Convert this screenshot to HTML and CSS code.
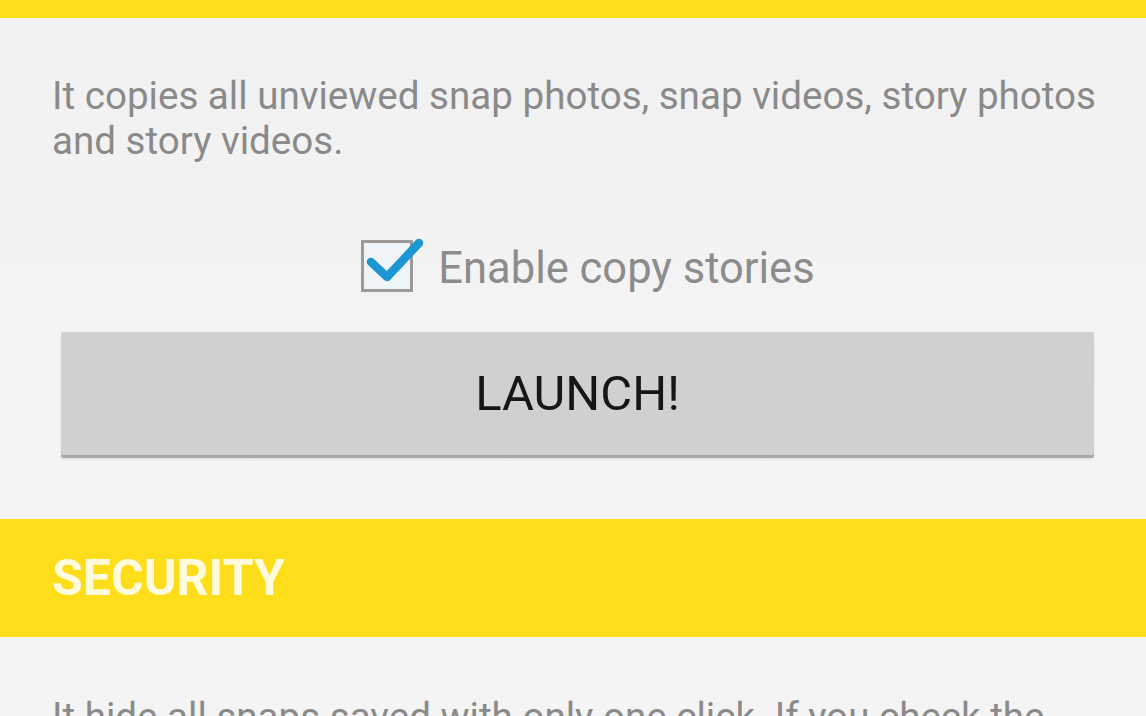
FILE: index.html
```html
<!DOCTYPE html>
<html>
<head>
<meta charset="utf-8">
<link rel="stylesheet" href="styles.css">
</head>
<body>
<div class="page">
  <div class="topbar"></div>
  <section class="content">
    <p class="desc">It copies all unviewed snap photos, snap videos, story photos<br>and story videos.</p>
    <label class="check-row">
      <span class="checkbox">
        <svg width="64" height="58" viewBox="0 0 64 58">
          <rect x="1.5" y="6.5" width="49" height="49" fill="rgba(235,245,250,0.6)" stroke="#9b9b9b" stroke-width="3"/>
          <path d="M10 27 L26 42 L58 8" fill="none" stroke="#1c97d1" stroke-width="8.5" stroke-linecap="round" stroke-linejoin="round"/>
        </svg>
      </span>
      <span class="check-label">Enable copy stories</span>
    </label>
    <div class="btn-wrap">
      <button class="launch">LAUNCH!</button>
    </div>
  </section>
  <div class="section-head">SECURITY</div>
  <section class="content2">
    <p class="desc">It hide all snaps saved with only one click. If you check the</p>
  </section>
</div>
</body>
</html>
```

FILE: styles.css
```css
html, body {
  margin: 0;
  padding: 0;
}
body {
  width: 1146px;
  height: 716px;
  overflow: hidden;
  background: #f4f4f4;
  font-family: Roboto, "Noto Sans", sans-serif;
}
.page {
  display: flex;
  flex-direction: column;
}
.topbar {
  height: 18px;
  background: #fedd1a;
  box-shadow: 0 1px 2px rgba(255, 230, 100, 0.6);
}
.content {
  padding: 0 40px 0 52px;
  background: linear-gradient(#f1f1f1, #f5f5f5);
}
.desc {
  margin: 0;
  padding-top: 55px;
  font-size: 38.6px;
  line-height: 45px;
  color: #8a8a8a;
  white-space: nowrap;
}
.check-row {
  display: flex;
  align-items: center;
  justify-content: center;
  gap: 13px;
  margin-top: 77px;
  height: 56px;
  padding-left: 18px;
}
.checkbox {
  display: flex;
  margin-top: -8px;
}
.check-label {
  font-size: 43.5px;
  color: #8c8c8c;
}
.btn-wrap {
  padding: 36px 0 64px 9px;
}
.launch {
  display: block;
  width: 1033px;
  height: 123px;
  border: none;
  border-radius: 2px;
  background: #d0d0d0;
  box-shadow: 0 3px 0 #a9a9a9, 0 5px 3px rgba(0,0,0,0.07);
  font-family: Roboto, sans-serif;
  font-size: 49px;
  color: #161616;
  padding: 0;
}
.section-head {
  height: 118px;
  background: #fedd1a;
  color: #fffbdc;
  font-weight: bold;
  font-size: 50px;
  display: flex;
  align-items: center;
  padding-left: 52px;
}
.content2 {
  padding: 0 40px 0 52px;
}
.content2 .desc {
  padding-top: 57px;
}
```
